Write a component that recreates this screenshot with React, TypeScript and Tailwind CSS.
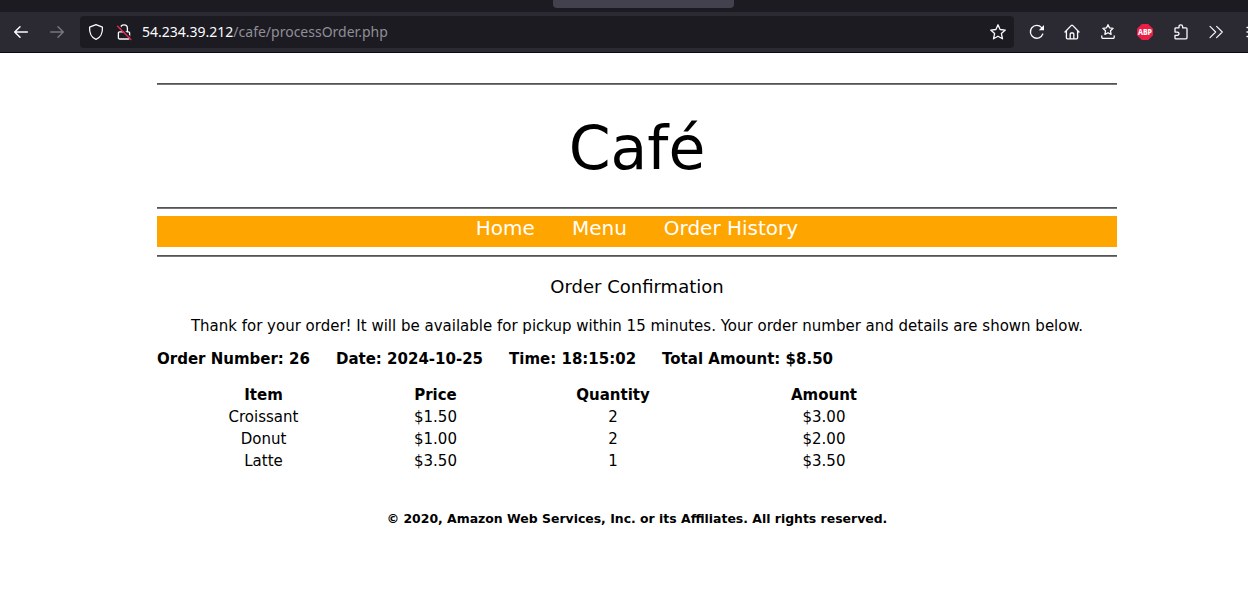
import React from "react";

const items = [
  { name: "Croissant", price: "$1.50", quantity: 2, amount: "$3.00" },
  { name: "Donut", price: "$1.00", quantity: 2, amount: "$2.00" },
  { name: "Latte", price: "$3.50", quantity: 1, amount: "$3.50" },
];

function Icon({ children, className = "" }: { children: React.ReactNode; className?: string }) {
  return (
    <svg
      viewBox="0 0 16 16"
      className={`size-4 shrink-0 overflow-visible ${className}`}
      fill="none"
      stroke="currentColor"
      strokeWidth="1.3"
      strokeLinecap="round"
      strokeLinejoin="round"
    >
      {children}
    </svg>
  );
}

function Toolbar() {
  return (
    <div className="flex h-[41px] items-start overflow-hidden border-b border-[#0c0c0d] bg-[#2b2a33] pt-1 text-[#fbfbfe]">
      <div className="flex h-8 w-20 shrink-0 items-center gap-5 pl-[13px]">
        <Icon>
          <path d="M14.3 8H1.7M7 2.8L1.7 8L7 13.2" strokeWidth="1.5" />
        </Icon>
        <Icon className="text-[#77767d]">
          <path d="M1.7 8h12.6M9 2.8L14.3 8L9 13.2" strokeWidth="1.5" />
        </Icon>
      </div>
      <div className="flex h-8 w-[934px] shrink-0 items-center rounded bg-[#1c1b22] px-2">
        <Icon>
          <path d="M8 0.7L14.4 3.2C14.8 8.5 12.6 13.6 8 15.3C3.4 13.6 1.2 8.5 1.6 3.2Z" />
        </Icon>
        <Icon className="ml-3">
          <path d="M4.6 4.2a3.4 3.4 0 0 1 6.8 0V7.4M3.6 7.8h8.8a1.2 1.2 0 0 1 1.2 1.2v4.8a1.2 1.2 0 0 1-1.2 1.2H3.6a1.2 1.2 0 0 1-1.2-1.2V9a1.2 1.2 0 0 1 1.2-1.2z" />
          <path d="M2.4 1.2L15.2 14" stroke="#1c1b22" strokeWidth="1.4" />
          <path d="M1.6 2.3L14.8 15.5" stroke="#e22850" strokeWidth="1.5" />
        </Icon>
        <div className="ml-[10px] flex-1 whitespace-nowrap font-['Noto_Sans',sans-serif] text-sm leading-8 text-[#8f8f96]">
          <span className="text-[#fbfbfe]">54.234.39.212</span>/cafe/processOrder.php
        </div>
        <Icon>
          <path d="M8 0.8l2.1 4.7 5.2.6-3.9 3.5 1.1 5.2L8 12.2l-4.5 2.6 1.1-5.2L.7 6.1l5.2-.6z" />
        </Icon>
      </div>
      <div className="ml-[15px] flex h-8 shrink-0 items-center gap-5">
        <Icon>
          <path d="M13.8 10A6.4 6.4 0 1 1 12.6 3.6" />
          <path d="M15 1v5.2H9.8z" fill="currentColor" stroke="none" />
        </Icon>
        <Icon className="-ml-px">
          <path d="M1 8L7.4 1.4a.9.9 0 0 1 1.2 0L15 8M2.4 7v6.8a1 1 0 0 0 1 1h9.2a1 1 0 0 0 1-1V7M6.2 14.5V10a1 1 0 0 1 1-1h1.6a1 1 0 0 1 1 1v4.5" />
        </Icon>
        <Icon>
          <path d="M8 .7l1.5 3.1 3.6.5-2.6 2.5.6 3.6L8 8.7l-3.1 1.7.6-3.6-2.6-2.5 3.6-.5zM1.8 11.8v1.4a1.2 1.2 0 0 0 1.2 1.2h10a1.2 1.2 0 0 0 1.2-1.2v-1.4" />
        </Icon>
        <span className="ml-px flex size-4 items-center justify-center bg-[#ed1e45] [clip-path:polygon(30%_0,70%_0,100%_30%,100%_70%,70%_100%,30%_100%,0_70%,0_30%)]">
          <span className="scale-y-125 font-['Noto_Sans',sans-serif] text-[7px] font-extrabold leading-4 text-white">ABP</span>
        </span>
        <Icon>
          <path d="M2 6V4.7a.9.9 0 0 1 .9-.9H6V2.6a1.8 1.8 0 0 1 3.6 0v1.2H13a1 1 0 0 1 1 1v9a1 1 0 0 1-1 1H2.9a.9.9 0 0 1-.9-.9v-2.6h2.4a1.6 1.6 0 0 0 0-3.2H2V6" />
        </Icon>
        <Icon className="-ml-px">
          <path d="M2 2.4L7.7 8L2 13.6M8.6 2.4L14.3 8L8.6 13.6" strokeWidth="1.1" />
        </Icon>
        <Icon className="ml-0.5">
          <path d="M1 3.5h14M1 8h14M1 12.5h14" />
        </Icon>
      </div>
    </div>
  );
}

function Rule() {
  return <div className="h-[2px] border-t border-[#555555] bg-[#777777]" />;
}

export default function App() {
  return (
    <div className="h-[589px] overflow-hidden bg-white font-['DejaVu_Sans',sans-serif] text-[15px] leading-[18px] text-black">
      <div className="flex h-3 bg-[#1c1b22]">
        <div className="ml-[553px] h-2 w-[181px] rounded-b bg-[#42414d]" />
      </div>
      <Toolbar />
      <main className="ml-[157px] w-[960px] pt-[30px]">
        <Rule />
        <h1 className="h-[122px] pt-[28px] text-center text-[60px] leading-[70px]">Café</h1>
        <Rule />
        <nav className="my-[7px] mb-2 flex h-[31px] justify-center gap-[37px] bg-[#ffa500] text-xl leading-6 text-white">
          <a>Home</a>
          <a>Menu</a>
          <a>Order History</a>
        </nav>
        <Rule />
        <h2 className="pt-[19px] text-center text-[18px] leading-[22px]">Order Confirmation</h2>
        <p className="pt-[19px] text-center">
          Thank for your order! It will be available for pickup within 15 minutes. Your order number and details are shown below.
        </p>
        <div className="flex gap-[26px] whitespace-nowrap pt-[15px] font-bold">
          <span>Order Number: 26</span>
          <span>Date: 2024-10-25</span>
          <span>Time: 18:15:02</span>
          <span>Total Amount: $8.50</span>
        </div>
        <table className="mt-4 w-[766px] table-fixed border-collapse text-center">
          <colgroup>
            <col className="w-[213px]" />
            <col className="w-[131px]" />
            <col className="w-[224px]" />
            <col className="w-[198px]" />
          </colgroup>
          <thead>
            <tr className="h-[22px] font-bold">
              <th>Item</th>
              <th>Price</th>
              <th>Quantity</th>
              <th>Amount</th>
            </tr>
          </thead>
          <tbody>
            {items.map((item) => (
              <tr key={item.name} className="h-[22px]">
                <td>{item.name}</td>
                <td>{item.price}</td>
                <td>{item.quantity}</td>
                <td>{item.amount}</td>
              </tr>
            ))}
          </tbody>
        </table>
        <footer className="pt-[39px] text-center text-[12.45px] font-bold leading-4">
          © 2020, Amazon Web Services, Inc. or its Affiliates. All rights reserved.
        </footer>
      </main>
    </div>
  );
}
